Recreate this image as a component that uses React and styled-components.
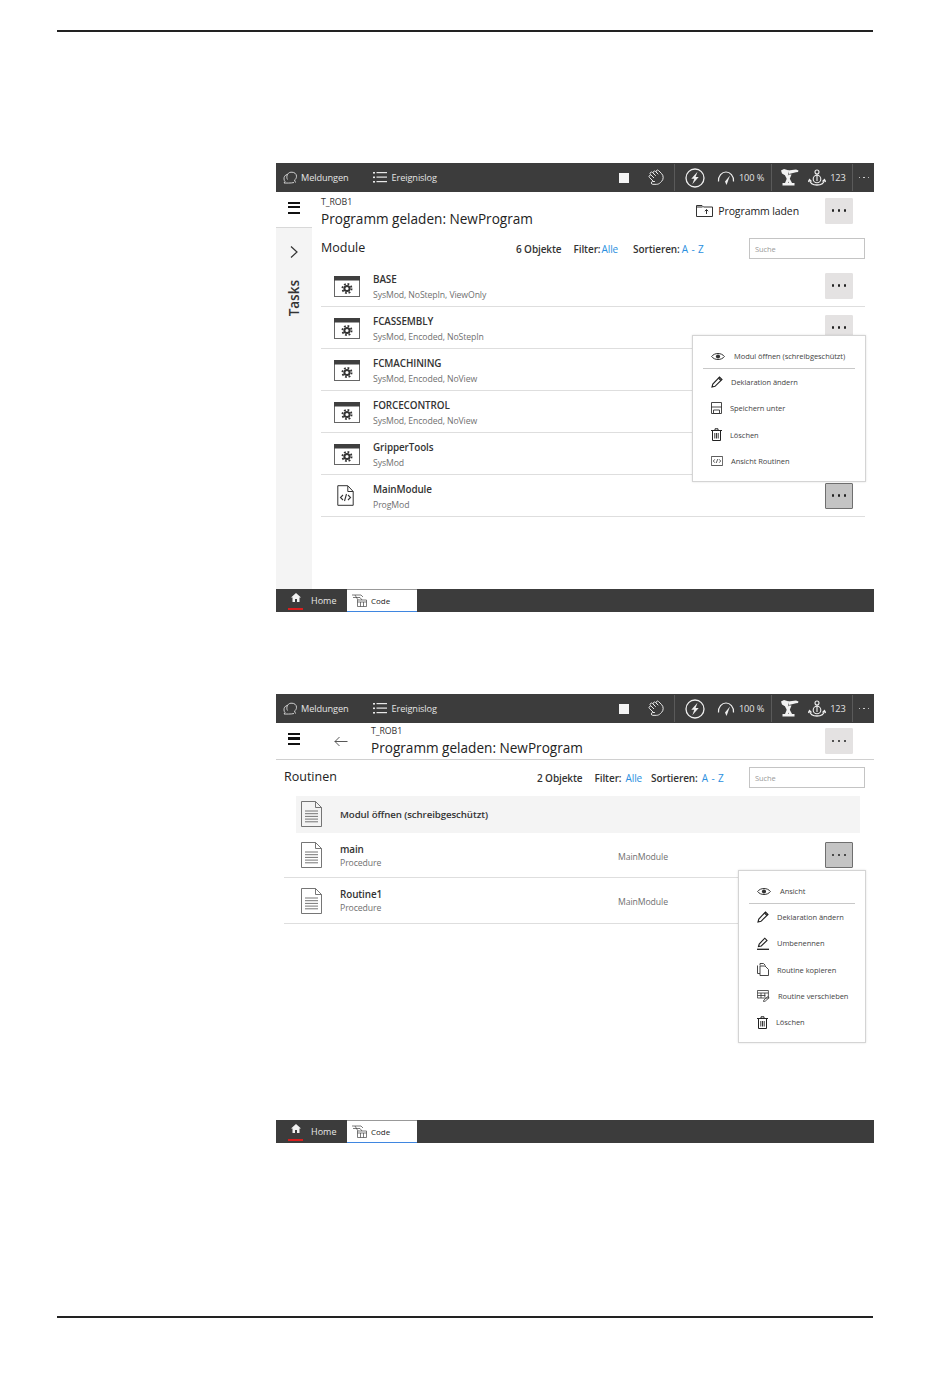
import React from 'react';
import styled, { createGlobalStyle } from 'styled-components';
import { Hand } from 'lucide-react';

const GlobalStyle = createGlobalStyle`
  html, body { margin: 0; padding: 0; background: #fff; }
  body { font-family: "Open Sans", "Noto Sans", sans-serif; color: #262626; }
`;

const Page = styled.div`
  width: 950px;
  height: 1378px;
  box-sizing: border-box;
  padding: 30px 0 0 57px;
  overflow: hidden;
`;
const Rule = styled.div`
  width: 816px;
  height: ${(p) => p.$h}px;
  background: #222;
  margin-top: ${(p) => p.$top || 0}px;
`;
const Screen = styled.section`
  position: relative;
  width: 598px;
  height: 449px;
  margin: ${(p) => p.$top}px 0 0 219px;
  display: flex;
  flex-direction: column;
  background: #fff;
`;

/* top status bar */
const TopBar = styled.div`
  height: 29px;
  flex: none;
  background: #3c3c3c;
  color: #e4e4e4;
  display: flex;
  align-items: center;
  font-size: 9.2px;
  letter-spacing: -0.1px;
  padding-left: 7px;
`;
const BarItem = styled.div`
  display: flex;
  align-items: center;
  gap: ${(p) => p.$gap || 4}px;
  margin-left: ${(p) => p.$ml || 0}px;
  white-space: nowrap;
`;
const BarSep = styled.div`
  width: 1px;
  height: 27px;
  background: #5a5a5a;
  margin-left: ${(p) => p.$ml}px;
`;
const StopSquare = styled.div`
  width: 10px;
  height: 10px;
  background: #f4f4f4;
`;
const BarDots = styled.div`
  display: flex;
  gap: 3px;
  margin-left: 6px;
  & > i { width: 1.6px; height: 1.6px; border-radius: 50%; background: #e4e4e4; }
`;
const TiltedHand = styled(Hand)`
  transform: rotate(-45deg);
`;

/* body */
const Body = styled.div`
  flex: 1;
  display: flex;
  min-height: 0;
`;
const Side = styled.aside`
  width: 36px;
  flex: none;
  display: flex;
  flex-direction: column;
`;
const SideHead = styled.div`
  height: 36px;
  flex: none;
  box-sizing: border-box;
  padding-bottom: 4px;
  display: flex;
  align-items: center;
  justify-content: center;
  border-bottom: 1px solid #d8d8d8;
`;
const TasksPane = styled.div`
  flex: 1;
  background: #f4f4f4;
  display: flex;
  flex-direction: column;
  align-items: center;
  padding-top: 17px;
`;
const TasksLabel = styled.div`
  writing-mode: vertical-rl;
  transform: rotate(180deg);
  font-size: 13.5px;
  font-weight: 600;
  color: #333;
  margin-top: 21px;
  line-height: 16px;
`;
const Burger = styled.div`
  width: 12px;
  height: 12px;
  flex: none;
  box-sizing: border-box;
  margin-bottom: ${(p) => p.$up || 0}px;
  border-top: 2.5px solid #111;
  border-bottom: 2.5px solid #111;
  position: relative;
  &::after {
    content: '';
    position: absolute;
    left: 0;
    right: 0;
    top: 2.25px;
    height: 2.5px;
    background: #111;
  }
`;
const Main = styled.div`
  flex: 1;
  min-width: 0;
  padding: 0 9px;
  display: flex;
  flex-direction: column;
`;
const Head = styled.div`
  display: flex;
  align-items: center;
  height: 37px;
  flex: none;
`;
const TitleBlock = styled.div`
  flex: 1;
  display: flex;
  flex-direction: column;
  padding-top: ${(p) => p.$pt}px;
`;
const Crumb = styled.div`
  font-size: 8.8px;
  line-height: 10px;
  letter-spacing: -0.1px;
  color: #333;
`;
const Title = styled.div`
  font-size: 13.6px;
  line-height: 20px;
  margin-top: 2px;
  color: #222;
`;
const LoadBtn = styled.div`
  display: flex;
  align-items: center;
  gap: 5px;
  font-size: 10.5px;
  letter-spacing: -0.1px;
  margin-right: 26px;
  color: #222;
`;
const DotsBtn = styled.div`
  width: 28px;
  height: 26px;
  box-sizing: border-box;
  flex: none;
  margin-right: ${(p) => p.$mr}px;
  border-radius: 1px;
  display: flex;
  align-items: center;
  justify-content: center;
  gap: 3.6px;
  background: ${(p) => (p.$active ? '#c4c4c4' : '#e4e2e2')};
  border: 1px solid ${(p) => (p.$active ? '#6f6f6f' : '#e4e2e2')};
  & > i { width: 2.6px; height: 2.6px; background: #222; border-radius: 40%; }
`;
const Dots = ({ active, mr = 12 }) => (
  <DotsBtn $active={active} $mr={mr}>
    <i />
    <i />
    <i />
  </DotsBtn>
);

const ListHead = styled.div`
  height: ${(p) => p.$h}px;
  margin-top: ${(p) => p.$top || 0}px;
  flex: none;
  display: flex;
  align-items: center;
  font-size: 10px;
  font-weight: 600;
  letter-spacing: -0.1px;
  color: #333;
`;
const ListTitle = styled.div`
  font-size: 12.5px;
  font-weight: 400;
  letter-spacing: 0;
  color: #222;
  width: ${(p) => p.$w}px;
  flex: none;
  margin-bottom: 2px;
`;
const Stat = styled.div`
  margin-right: ${(p) => p.$mr}px;
  white-space: nowrap;
  & > b {
    font-weight: 400;
    color: #2b8fe0;
    word-spacing: 1px;
    margin-left: ${(p) => p.$lg || 1}px;
  }
`;
const SearchBox = styled.div`
  margin-left: auto;
  width: 116px;
  height: 21px;
  box-sizing: border-box;
  border: 1px solid #c4c4c4;
  font-size: 7.5px;
  font-weight: 400;
  color: #9a9a9a;
  padding-left: 5px;
  display: flex;
  align-items: center;
`;
const List = styled.div`
  display: flex;
  flex-direction: column;
  margin-top: 1px;
`;
const Row = styled.div`
  height: ${(p) => p.$h}px;
  box-sizing: border-box;
  display: flex;
  align-items: center;
  border-bottom: 1px solid #dedede;
  padding-left: ${(p) => p.$pl}px;
`;
const RowIcon = styled.div`
  width: ${(p) => p.$w}px;
  flex: none;
  display: flex;
  align-items: center;
  padding-top: ${(p) => p.$pt || 0}px;
`;
const RowText = styled.div`
  flex: 1;
  min-width: 0;
  padding-top: ${(p) => p.$pt}px;
`;
const RowName = styled.div`
  font-size: 9.9px;
  line-height: 13px;
  font-weight: 600;
  letter-spacing: -0.1px;
  color: #333;
`;
const RowSub = styled.div`
  font-size: 8.7px;
  line-height: 11px;
  margin-top: ${(p) => p.$mt}px;
  letter-spacing: -0.1px;
  color: #707070;
`;
const RowMeta = styled.div`
  font-size: 8.7px;
  letter-spacing: -0.1px;
  color: #707070;
  width: 207px;
  flex: none;
  padding-top: 3px;
`;
const RowSpacer = styled.div`
  width: 40px;
  flex: none;
`;
const Highlight = styled.div`
  height: 37px;
  box-sizing: border-box;
  margin: 0 5px 0 12px;
  background: #f4f4f4;
  display: flex;
  align-items: center;
  padding: 0 0 1px 5px;
  font-size: 9.7px;
  font-weight: 600;
  letter-spacing: -0.1px;
  color: #333;
`;

/* second screen stacks its head over the full width */
const Stack = styled.div`
  flex: 1;
  min-height: 0;
  display: flex;
  flex-direction: column;
`;
const WideHead = styled.div`
  height: 37px;
  flex: none;
  box-sizing: border-box;
  border-bottom: 1px solid #d0d0d0;
  display: flex;
  align-items: center;
  padding-left: 12px;
`;
const BackSlot = styled.div`
  width: 71px;
  flex: none;
  padding-left: 34px;
  box-sizing: border-box;
  display: flex;
  align-items: center;
`;
const WideBody = styled.div`
  flex: 1;
  min-height: 0;
  padding: 0 9px 0 8px;
  display: flex;
  flex-direction: column;
`;

/* bottom tabs */
const BottomBar = styled.div`
  height: 23px;
  flex: none;
  background: #3c3c3c;
  display: flex;
  align-items: stretch;
  padding-left: 12px;
`;
const HomeTab = styled.div`
  width: 59px;
  display: flex;
  align-items: center;
  gap: 8px;
  color: #e8e8e8;
  font-size: 9px;
`;
const HomeMark = styled.div`
  width: 15px;
  height: 15px;
  margin-top: 1px;
  border-bottom: 2px solid #d81e1e;
  display: flex;
  justify-content: center;
  align-items: flex-start;
`;
const CodeTab = styled.div`
  width: 70px;
  box-sizing: border-box;
  background: #fff;
  border-top: 1px solid #999;
  border-bottom: 1px solid #3f86e0;
  display: flex;
  align-items: center;
  gap: 4px;
  padding-left: 5px;
  font-size: 8px;
  color: #222;
`;

/* context menu */
const Menu = styled.div`
  position: absolute;
  left: ${(p) => p.$left}px;
  top: ${(p) => p.$top}px;
  width: ${(p) => p.$w}px;
  box-sizing: border-box;
  padding: 8px 10px 7px;
  background: #fff;
  border: 1px solid #d4d4d4;
  box-shadow: 0 0 2px rgba(0, 0, 0, 0.12);
  font-size: 7.5px;
  letter-spacing: -0.05px;
  color: #444;
`;
const MenuHead = styled.div`
  height: 24px;
  border-bottom: 1px solid #c8c8c8;
  display: flex;
  align-items: center;
  padding-left: 8px;
  gap: 9px;
  white-space: nowrap;
`;
const MenuItem = styled.div`
  height: 26.3px;
  display: flex;
  align-items: center;
  padding-left: 8px;
  gap: 8px;
  white-space: nowrap;
`;

/* ---- icons ---- */
const Meldungen = () => (
  <svg width="14" height="13" viewBox="0 0 14 13" fill="none" stroke="#ddd" strokeWidth="0.9">
    <path d="M4.500 8.500C3 6 4 1.500 8 1.200c3.500-.3 5.500 1.800 5.500 4 0 2-1 3.300-2 3.800l1 2.500" />
    <path d="M4 3.500C2 4 .8 6 1 8c0 1 .5 2 1 2.500L1 12c2 0 7 .3 10-.5" />
  </svg>
);
const ListIcon = () => (
  <svg width="14" height="13" viewBox="0 0 14 13" fill="#e8e8e8">
    <rect x="0" y="1" width="2" height="1.6" />
    <rect x="0" y="5.500" width="2" height="1.6" />
    <rect x="0" y="10" width="2" height="1.6" />
    <rect x="3.500" y="1" width="10.500" height="1.2" />
    <rect x="3.500" y="5.500" width="10.500" height="1.2" />
    <rect x="3.500" y="10" width="10.500" height="1.2" />
  </svg>
);
const Bolt = () => (
  <svg width="20" height="20" viewBox="0 0 20 20" fill="none">
    <circle cx="10" cy="10" r="9" stroke="#eee" strokeWidth="1.3" />
    <path d="M12.500 3.800 6.300 10.800h3l-2 5.500 6.400-7.300h-3.100z" fill="#eee" />
  </svg>
);
const Gauge = () => (
  <svg width="18" height="16" viewBox="0 0 18 16" fill="none" stroke="#eee" strokeWidth="1.2">
    <path d="M1.500 11.500C1 6 5 2 9 2c4 0 8 4 7.500 9.500" />
    <path d="M13 5.500 8 11.500l1.500 3.500z" fill="#eee" stroke="none" />
  </svg>
);
const Robot = () => (
  <svg width="18" height="17" viewBox="0 0 18 17" fill="#f2f2f2">
    <path d="M0 1.500 3 0l5 1.500-1 4.500H3.500L1 4.500z" />
    <path d="M7 1.500 15 .5l2.500 1-.5 1.500-2 .3-7 1.700z" />
    <path d="M3.500 5.500h3l4.500 8.500H8z" />
    <path d="M7.500 5.500h3L7 14H4z" />
    <rect x="1.500" y="14" width="12" height="2.500" />
  </svg>
);
const Jog = () => (
  <svg width="18" height="18" viewBox="0 0 18 18" fill="none" stroke="#eee" strokeWidth="1.1">
    <circle cx="9" cy="3" r="2" />
    <path d="M9 5v7" />
    <circle cx="9" cy="10" r="3.800" />
    <path d="M1.500 11c.5 3 3.500 5 7.500 5s7-2 7.500-5" strokeWidth="1.400" />
    <path d="M0 13l1.500-2.500L3.500 12.500M18 13l-1.500-2.500L14.500 12.500" />
  </svg>
);
const Chevron = () => (
  <svg width="10" height="14" viewBox="0 0 10 14" fill="none" stroke="#333" strokeWidth="1.2">
    <path d="M2 1.500 8 7l-6 5.500" />
  </svg>
);
const Back = () => (
  <svg width="14" height="11" viewBox="0 0 14 11" fill="none" stroke="#444" strokeWidth="0.9">
    <path d="M13.500 5.500H.800M5.500 1 1 5.500 5.500 10" />
  </svg>
);
const FolderUp = () => (
  <svg width="17" height="13" viewBox="0 0 17 13" fill="none" stroke="#333" strokeWidth="1">
    <path d="M.5 12.500V1.500h5.500l1.500 1.500h9v9.500z" />
    <path d="M.5 3h6" />
    <path d="M10.500 10V5.500M8.800 7.200l1.700-1.700 1.700 1.700" />
  </svg>
);
const ModuleIcon = () => (
  <svg width="26" height="21" viewBox="0 0 26 21" fill="none">
    <rect x="0.500" y="0.500" width="25" height="20" stroke="#666" fill="#fff" />
    <rect x="0" y="0" width="26" height="4.500" fill="#3f3f3f" />
    <circle cx="13" cy="12.500" r="2.600" stroke="#333" strokeWidth="2" />
    <circle cx="13" cy="12.500" r="4.600" stroke="#333" strokeWidth="1.800" strokeDasharray="1.800 1.810" />
  </svg>
);
const CodeFile = () => (
  <svg width="17" height="21" viewBox="0 0 17 21" fill="none" stroke="#333" strokeWidth="1">
    <path d="M.8.700h10l5.400 5.800v13.800H.8z" />
    <path d="M10.800 1v5.500h5.400" />
    <path d="M6 10 3.500 12.500 6 15M11 10l2.500 2.500L11 15M9.500 9l-2 7" strokeWidth="1.100" />
  </svg>
);
const DocIcon = () => (
  <svg width="21" height="26" viewBox="0 0 21 26" fill="none" stroke="#666" strokeWidth="0.9">
    <path d="M.5.500h14l6 6v19H.5z" />
    <path d="M14.500.5v6h6" />
    <path d="M4 10h13M4 12.700h13M4 15.400h13M4 18.100h13M4 20.800h13" />
  </svg>
);
const Eye = () => (
  <svg width="14" height="9" viewBox="0 0 14 9" fill="none" stroke="#333" strokeWidth="1">
    <path d="M.6 4.500C3.500.5 10.500.5 13.400 4.500 10.500 8.500 3.500 8.500.6 4.500z" />
    <circle cx="7" cy="4.500" r="2.100" fill="#333" stroke="none" />
  </svg>
);
const Pencil = () => (
  <svg width="12" height="12" viewBox="0 0 12 12" fill="none" stroke="#222" strokeWidth="1.1">
    <path d="M1 11l.8-3L8.500 1l2.500 2.500L4 10.300z" />
    <path d="M7.500 2l2.500 2.500" />
  </svg>
);
const Rename = () => (
  <svg width="12" height="13" viewBox="0 0 12 13" fill="none" stroke="#222" strokeWidth="1.1">
    <path d="M1.500 9.500l.7-2.500L7.800 1.200 10 3.400 4.300 9z" />
    <path d="M0 12.300h12" strokeWidth="1.300" />
  </svg>
);
const Save = () => (
  <svg width="11" height="12" viewBox="0 0 11 12" fill="none" stroke="#333" strokeWidth="0.9">
    <path d="M.5.500h10v11H.5z" />
    <path d="M.5 5h10M2.500 8h6v3.500h-6z" />
  </svg>
);
const Trash = () => (
  <svg width="11" height="13" viewBox="0 0 11 13" fill="none" stroke="#222" strokeWidth="1">
    <path d="M0 2.500h11M4 2.500V.8h3v1.700" />
    <path d="M1.500 2.500h8v10h-8z" />
    <path d="M3.800 5v5.500M5.500 5v5.500M7.200 5v5.500" strokeWidth="0.9" />
  </svg>
);
const CodeBox = () => (
  <svg width="12" height="10" viewBox="0 0 12 10" fill="none" stroke="#333" strokeWidth="0.8">
    <path d="M.4.500h11.200v9H.4z" />
    <path d="M3.800 3.300 2.300 5l1.500 1.700M8.200 3.300 9.700 5 8.200 6.700M6.800 3 5.200 7" />
  </svg>
);
const Copy = () => (
  <svg width="12" height="13" viewBox="0 0 12 13" fill="none" stroke="#333" strokeWidth="0.9">
    <path d="M3 2.500V.5h3.500l2 2" />
    <path d="M.5 2.500v8H3" />
    <path d="M3 3h5l3.500 3.500v6H3z" />
  </svg>
);
const MoveTable = () => (
  <svg width="13" height="12" viewBox="0 0 13 12" fill="none" stroke="#333" strokeWidth="0.8">
    <path d="M.4.500h11v7.500H.4zM.4 3h11M.4 5.500h8M4 3v5M7.800 3v4" />
    <path d="M6.500 11.500l.4-1.500 4-3.500 1.300 1.200-4 3.500z" />
  </svg>
);
const Home = () => (
  <svg width="10" height="9" viewBox="0 0 10 9" fill="#f2f2f2">
    <path d="M5 0 10 4.500H8.500V9H6V6H4v3H1.500V4.500H0z" />
  </svg>
);
const CodeTabIcon = () => (
  <svg width="15" height="13" viewBox="0 0 15 13" fill="none" stroke="#444" strokeWidth="0.7">
    <path d="M0 1h9l2 2M1 3.500h7l2 2.500M3 1l3 5" />
    <path d="M5.500 6h9v6.500h-9zM5.500 8h9M8.500 8v4.500M11.500 8v4.500" />
  </svg>
);

const StatusBar = () => (
  <TopBar>
    <BarItem>
      <Meldungen />
      Meldungen
    </BarItem>
    <BarItem $ml={24} $gap={5}>
      <ListIcon />
      Ereignislog
    </BarItem>
    <BarItem $ml={182}>
      <StopSquare />
    </BarItem>
    <BarItem $ml={18}>
      <TiltedHand size={17} color="#eee" strokeWidth={1.3} />
    </BarItem>
    <BarSep $ml={10} />
    <BarItem $ml={10}>
      <Bolt />
    </BarItem>
    <BarItem $ml={12} $gap={4}>
      <Gauge />
      100 %
    </BarItem>
    <BarSep $ml={7} />
    <BarItem $ml={9}>
      <Robot />
    </BarItem>
    <BarItem $ml={9}>
      <Jog />
      123
    </BarItem>
    <BarSep $ml={6} />
    <BarDots>
      <i />
      <i />
      <i />
    </BarDots>
  </TopBar>
);

const TabBar = () => (
  <BottomBar>
    <HomeTab>
      <HomeMark>
        <Home />
      </HomeMark>
      Home
    </HomeTab>
    <CodeTab>
      <CodeTabIcon />
      Code
    </CodeTab>
  </BottomBar>
);

const modules = [
  ['BASE', 'SysMod, NoStepIn, ViewOnly'],
  ['FCASSEMBLY', 'SysMod, Encoded, NoStepIn'],
  ['FCMACHINING', 'SysMod, Encoded, NoView'],
  ['FORCECONTROL', 'SysMod, Encoded, NoView'],
  ['GripperTools', 'SysMod'],
];

const App = () => (
  <Page>
    <GlobalStyle />
    <Rule $h={2} />

    <Screen $top={131}>
      <StatusBar />
      <Body>
        <Side>
          <SideHead>
            <Burger />
          </SideHead>
          <TasksPane>
            <Chevron />
            <TasksLabel>Tasks</TasksLabel>
          </TasksPane>
        </Side>
        <Main>
          <Head>
            <TitleBlock $pt={4}>
              <Crumb>T_ROB1</Crumb>
              <Title>Programm geladen: NewProgram</Title>
            </TitleBlock>
            <LoadBtn>
              <FolderUp />
              Programm laden
            </LoadBtn>
            <Dots />
          </Head>
          <ListHead $h={31} $top={4}>
            <ListTitle $w={195}>Module</ListTitle>
            <Stat $mr={12}>6 Objekte</Stat>
            <Stat $mr={15}>
              Filter:<b>Alle</b>
            </Stat>
            <Stat $mr={0} $lg={2}>
              Sortieren:<b>A - Z</b>
            </Stat>
            <SearchBox>Suche</SearchBox>
          </ListHead>
          <List>
            {modules.map(([name, sub]) => (
              <Row key={name} $h={42} $pl={13}>
                <RowIcon $w={39} $pt={2}>
                  <ModuleIcon />
                </RowIcon>
                <RowText $pt={2}>
                  <RowName>{name}</RowName>
                  <RowSub $mt={4}>{sub}</RowSub>
                </RowText>
                <Dots />
              </Row>
            ))}
            <Row $h={42} $pl={16}>
              <RowIcon $w={36}>
                <CodeFile />
              </RowIcon>
              <RowText $pt={2}>
                <RowName>MainModule</RowName>
                <RowSub $mt={4}>ProgMod</RowSub>
              </RowText>
              <Dots active />
            </Row>
          </List>
        </Main>
      </Body>
      <TabBar />
      <Menu $left={416} $top={172} $w={174}>
        <MenuHead>
          <Eye />
          Modul öffnen (schreibgeschützt)
        </MenuHead>
        <MenuItem>
          <Pencil />
          Deklaration ändern
        </MenuItem>
        <MenuItem>
          <Save />
          Speichern unter
        </MenuItem>
        <MenuItem>
          <Trash />
          Löschen
        </MenuItem>
        <MenuItem>
          <CodeBox />
          Ansicht Routinen
        </MenuItem>
      </Menu>
    </Screen>

    <Screen $top={82}>
      <StatusBar />
      <Stack>
        <WideHead>
          <Burger $up={4} />
          <BackSlot>
            <Back />
          </BackSlot>
          <TitleBlock $pt={2}>
            <Crumb>T_ROB1</Crumb>
            <Title>Programm geladen: NewProgram</Title>
          </TitleBlock>
          <Dots mr={21} />
        </WideHead>
        <WideBody>
          <ListHead $h={35}>
            <ListTitle $w={253}>Routinen</ListTitle>
            <Stat $mr={12}>2 Objekte</Stat>
            <Stat $mr={9} $lg={4}>
              Filter:<b>Alle</b>
            </Stat>
            <Stat $mr={0} $lg={4}>
              Sortieren:<b>A - Z</b>
            </Stat>
            <SearchBox>Suche</SearchBox>
          </ListHead>
          <List>
            <Highlight>
              <RowIcon $w={39}>
                <DocIcon />
              </RowIcon>
              Modul öffnen (schreibgeschützt)
            </Highlight>
            <Row $h={45} $pl={17}>
              <RowIcon $w={39}>
                <DocIcon />
              </RowIcon>
              <RowText $pt={1}>
                <RowName>main</RowName>
                <RowSub $mt={2}>Procedure</RowSub>
              </RowText>
              <RowMeta>MainModule</RowMeta>
              <Dots active />
            </Row>
            <Row $h={46} $pl={17}>
              <RowIcon $w={39}>
                <DocIcon />
              </RowIcon>
              <RowText $pt={1}>
                <RowName>Routine1</RowName>
                <RowSub $mt={2}>Procedure</RowSub>
              </RowText>
              <RowMeta>MainModule</RowMeta>
              <RowSpacer />
            </Row>
          </List>
        </WideBody>
      </Stack>
      <TabBar />
      <Menu $left={462} $top={176} $w={128}>
        <MenuHead>
          <Eye />
          Ansicht
        </MenuHead>
        <MenuItem>
          <Pencil />
          Deklaration ändern
        </MenuItem>
        <MenuItem>
          <Rename />
          Umbenennen
        </MenuItem>
        <MenuItem>
          <Copy />
          Routine kopieren
        </MenuItem>
        <MenuItem>
          <MoveTable />
          Routine verschieben
        </MenuItem>
        <MenuItem>
          <Trash />
          Löschen
        </MenuItem>
      </Menu>
    </Screen>

    <Rule $h={2} $top={173} />
  </Page>
);

export default App;
